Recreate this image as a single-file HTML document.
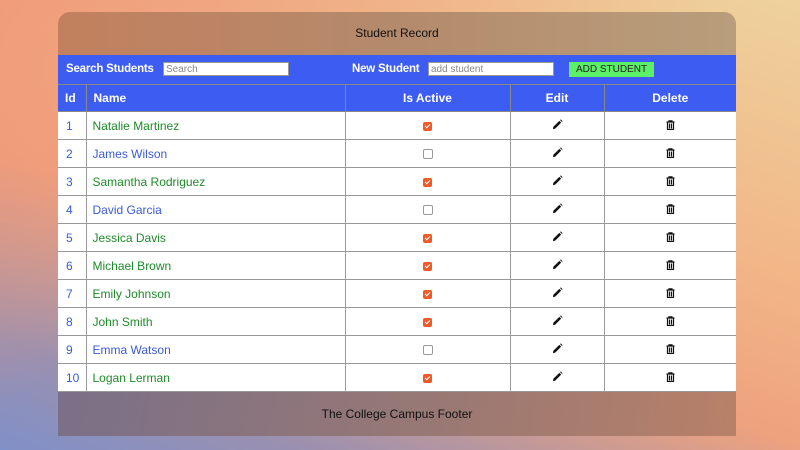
<!DOCTYPE html>
<html><head><style>
body{margin:0;width:800px;height:450px;overflow:hidden;font-family:"Liberation Sans",sans-serif;
background:linear-gradient(200deg,#eed29c 0%,#f2b486 40%,#eea27e 60%,#9a90b0 85%,#8090c8 100%);}
.bg2{position:absolute;inset:0;background:linear-gradient(to bottom right,rgba(240,150,120,.8),rgba(240,150,120,0) 45%);}
.card{position:absolute;left:58px;top:12px;width:678px;height:424px;}
.hdr{height:43px;border-radius:12px 12px 0 0;background:linear-gradient(90deg,#c2805e,#b48a6c 50%,#b89e7c);text-align:center;line-height:43px;font-size:12px;color:#111;}
.bar{height:30px;background:#3d5cf2;color:#fff;font-weight:bold;font-size:11.5px;position:relative;border-bottom:1px solid #888;box-sizing:border-box}
.bar span{position:absolute;top:8px;letter-spacing:-0.2px}
.bar input{position:absolute;top:7px;height:14px;border:1px solid #999;font-size:10px;padding:0 2px;box-sizing:border-box;font-family:inherit;color:#888;background:#fff}
.btn{position:absolute;left:511px;top:7px;width:85px;height:15px;background:#5cf068;color:#222;font-size:10px;text-align:center;line-height:15px;font-weight:normal}
table{border-collapse:collapse;width:678px;font-size:12px;table-layout:fixed}
th{background:#3d5cf2;color:#fff;height:26px;border:1px solid #888;border-top:none;padding:0}
td{background:#fff;height:27px;border:1px solid #999;padding:0;text-align:center}
tr td:first-child,tr th:first-child{border-left:none}
tr td:last-child,tr th:last-child{border-right:none}
td.id{color:#3a5ad8;text-align:left;padding-left:8px}
td.n{text-align:left;padding-left:6px}
th.l{text-align:left;padding-left:7px}
.g{color:#1f8a2a}.b{color:#3a5ad8}
.cb{display:inline-block;width:9px;height:9px;border-radius:2px;vertical-align:middle}
.on{background:#f05a28;position:relative}
.on:after{content:"";position:absolute;left:3px;top:1px;width:2px;height:4px;border:solid #fff;border-width:0 1.5px 1.5px 0;transform:rotate(45deg)}
.off{border:1px solid #999;box-sizing:border-box;width:10px;height:10px}
.ft{height:44px;background:linear-gradient(100deg,#7a7088,#987874 55%,#b88068);text-align:center;line-height:44px;font-size:12px;color:#111;}
</style></head><body><div class="bg2"></div>
<div class="card">
<div class="hdr">Student Record</div>
<div class="bar"><span style="left:8px">Search Students</span><input style="left:105px;width:126px" value="Search"><span style="left:294px">New Student</span><input style="left:370px;width:126px" value="add student"><div class="btn">ADD STUDENT</div></div>
<table>
<colgroup><col style="width:28px"><col style="width:259px"><col style="width:165px"><col style="width:94px"><col style="width:132px"></colgroup>
<tr><th class="l">Id</th><th class="l">Name</th><th>Is Active</th><th>Edit</th><th>Delete</th></tr>
</table>
<div class="ft">The College Campus Footer</div>
</div>
<script>
const d=[["Natalie Martinez",1],["James Wilson",0],["Samantha Rodriguez",1],["David Garcia",0],["Jessica Davis",1],["Michael Brown",1],["Emily Johnson",1],["John Smith",1],["Emma Watson",0],["Logan Lerman",1]];
const pen='<svg width="11" height="11" viewBox="0 0 12 12"><path d="M1 11 L1.5 8.5 L8 2 L10 4 L3.5 10.5 Z M8.8 1.2 L9.6 0.4 L11.6 2.4 L10.8 3.2 Z" fill="#111"/></svg>';
const bin='<svg width="9" height="10" viewBox="0 0 9 10"><path d="M0.5 2h8M3 2V0.8h3V2M1.5 2.5v7h6v-7M3.5 3.5v5M5.5 3.5v5" stroke="#111" stroke-width="1.2" fill="none"/></svg>';
let h='';d.forEach((r,i)=>{h+=`<tr><td class="id">${i+1}</td><td class="n ${r[1]?'g':'b'}">${r[0]}</td><td><span class="cb ${r[1]?'on':'off'}"></span></td><td>${pen}</td><td>${bin}</td></tr>`});
document.querySelector('table').insertAdjacentHTML('beforeend',h);
</script>
</body></html>
